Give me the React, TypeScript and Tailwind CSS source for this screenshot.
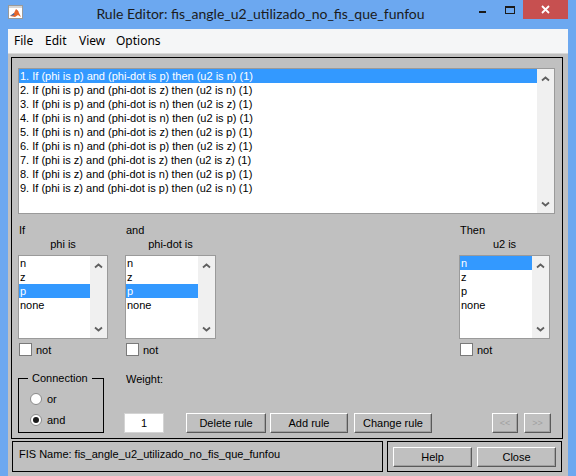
import React from "react";

const UI = "font-['Liberation_Sans',Arial,sans-serif] text-[11px]";

const RULES = [
  "1. If (phi is p) and (phi-dot is p) then (u2 is n) (1)",
  "2. If (phi is p) and (phi-dot is z) then (u2 is n) (1)",
  "3. If (phi is p) and (phi-dot is n) then (u2 is z) (1)",
  "4. If (phi is n) and (phi-dot is n) then (u2 is p) (1)",
  "5. If (phi is n) and (phi-dot is z) then (u2 is p) (1)",
  "6. If (phi is n) and (phi-dot is p) then (u2 is z) (1)",
  "7. If (phi is z) and (phi-dot is z) then (u2 is z) (1)",
  "8. If (phi is z) and (phi-dot is n) then (u2 is p) (1)",
  "9. If (phi is z) and (phi-dot is p) then (u2 is n) (1)",
];

const MF_ITEMS = ["n", "z", "p", "none"];

const Chevron = ({ down }: { down?: boolean }) => (
  <svg width="9" height="6" viewBox="0 0 9 6">
    <path
      d={down ? "M1 1.5 L4.5 4.5 L8 1.5" : "M1 4.5 L4.5 1.5 L8 4.5"}
      fill="none"
      stroke="#5f5f5f"
      strokeWidth="1.8"
    />
  </svg>
);

const ScrollBar = () => (
  <div className="w-[17px] bg-[#f0f0f0] flex flex-col items-center justify-between pt-[7px] pb-[6px]">
    <Chevron />
    <Chevron down />
  </div>
);

interface ListBoxProps {
  items: string[];
  selected: number;
  className: string;
}

const ListBox: React.FC<ListBoxProps> = ({ items, selected, className }) => (
  <div className={`flex border border-[#9a9a9a] bg-white ${className}`}>
    <div className="flex-1 overflow-hidden">
      {items.map((item, i) => (
        <div
          key={i}
          className={`h-[14px] leading-[14px] pl-[1px] whitespace-nowrap ${
            i === selected ? "bg-[#3399ff] text-white" : "text-black"
          }`}
        >
          {item}
        </div>
      ))}
    </div>
    <ScrollBar />
  </div>
);

const NotBox = () => (
  <div className="mt-[4px] ml-[1px] flex items-center h-[13px]">
    <div className="w-[13px] h-[13px] bg-white border border-[#7a7a7a]" />
    <span className="ml-[4px] leading-[14px]">not</span>
  </div>
);

interface ColumnProps {
  head: string;
  sub: string;
  selected: number;
  className: string;
}

const MfColumn: React.FC<ColumnProps> = ({ head, sub, selected, className }) => (
  <div className={`flex flex-col ${className}`}>
    <div className="h-[14px] leading-[14px] pl-[1px]">{head}</div>
    <div className="h-[14px] leading-[14px] text-center">{sub}</div>
    <ListBox items={MF_ITEMS} selected={selected} className="mt-[4px] h-[84px]" />
    <NotBox />
  </div>
);

const Btn = ({
  children,
  className,
  disabled,
}: {
  children: React.ReactNode;
  className: string;
  disabled?: boolean;
}) => (
  <button
    className={`h-[20px] bg-[#c0c0c0] border border-t-white border-l-white border-b-[#5a5a5a] border-r-[#5a5a5a] shadow-[inset_-1px_-1px_0_#a0a0a0] leading-[14px] ${
      disabled ? "text-[#a0a0a0] text-[9px]" : "text-black"
    } ${className}`}
  >
    {children}
  </button>
);

const Radio = ({ label, checked }: { label: string; checked?: boolean }) => (
  <div className="mt-[7px] h-[14px] flex items-center">
    <div className="w-[12px] h-[12px] rounded-full bg-white border border-[#8a8a8a] flex items-center justify-center">
      {checked && <div className="w-[6px] h-[6px] rounded-full bg-[#1a1a1a]" />}
    </div>
    <span className="ml-[5px] leading-[14px]">{label}</span>
  </div>
);

const MatlabIcon = () => (
  <svg width="15" height="14" viewBox="0 0 15 14">
    <rect x="0.5" y="0.5" width="14" height="13" fill="#ffffff" stroke="#9a9a9a" />
    <rect x="1" y="1" width="13" height="2" fill="#d6d6d6" />
    <path d="M2 11 L6 8 L8 4 L10 6 L13 12 L10 10 L7 12 Z" fill="#e8662a" />
    <path d="M8 4 L10 6 L13 12 L11 8 Z" fill="#b8301a" />
    <path d="M2 11 L6 8 L6.5 10 Z" fill="#3b6fb6" />
  </svg>
);

export default function App() {
  return (
    <div className="w-[576px] h-[476px] bg-[#6ca8f0] overflow-hidden flex flex-col">
      {/* title bar */}
      <div className="h-[29px] shrink-0 flex items-start">
        <div className="w-[30px] pl-[8px] pt-[5px]">
          <MatlabIcon />
        </div>
        <div className="flex-1 pl-[20px] text-center mt-[4px] leading-[20px] text-[14px] text-[#1b1b1b] font-['Lato',sans-serif] whitespace-nowrap">
          Rule Editor: fis_angle_u2_utilizado_no_fis_que_funfou
        </div>
        <div className="w-[26px] h-[20px] flex items-center justify-start pl-[8px]">
          <div className="w-[7px] h-[2px] bg-[#1b1b1b] mt-[4px]" />
        </div>
        <div className="w-[26px] h-[20px] flex items-center justify-center">
          <div className="w-[10px] h-[8px] border border-t-2 border-[#1b1b1b] -mt-[1px]" />
        </div>
        <div className="w-[45px] h-[19px] bg-[#c75050] flex items-center justify-center">
          <svg width="9" height="9" viewBox="0 0 9 9">
            <path d="M1 1 L8 8 M8 1 L1 8" stroke="#ffffff" strokeWidth="1.8" />
          </svg>
        </div>
        <div className="w-[8px]" />
      </div>

      {/* client area */}
      <div className="mx-[8px] flex-1 flex flex-col">
        {/* menu bar */}
        <div className="h-[25px] shrink-0 bg-[#f5f6f7] border-b border-[#d9d9d9] flex items-center text-[12px] text-black font-['Noto_Sans',sans-serif]">
          <span className="w-[31px] pl-[6px]">File</span>
          <span className="w-[34px] pl-[6px]">Edit</span>
          <span className="w-[37px] pl-[6px]">View</span>
          <span className="pl-[6px]">Options</span>
        </div>

        {/* figure */}
        <div className={`flex-1 bg-[#c0c0c0] pt-[3px] pl-[3px] ${UI} text-black`}>
          <div className="w-[552px] h-[382px] border border-black flex flex-col pt-[10px] px-[6px]">
            <ListBox items={RULES} selected={0} className="w-[537px] h-[146px]" />

            <div className="flex mt-[9px]">
              <MfColumn head="If" sub="phi is" selected={2} className="w-[90px]" />
              <MfColumn head="and" sub="phi-dot is" selected={2} className="w-[91px] ml-[17px]" />
              <MfColumn head="Then" sub="u2 is" selected={0} className="w-[91px] ml-[243px]" />
            </div>

            <div className="flex mt-[15px]">
              <fieldset className="w-[86px] h-[62px] border border-black">
                <legend className="ml-[9px] px-[4px] leading-[14px]">Connection</legend>
                <div className="pl-[11px]">
                  <Radio label="or" />
                  <Radio label="and" checked />
                </div>
              </fieldset>

              <div className="ml-[20px] flex flex-col">
                <div className="pl-[2px] pt-[1px] leading-[14px]">Weight:</div>
                <div className="flex mt-[27px]">
                  <div className="w-[40px] h-[20px] bg-white border border-[#d4d4d4] text-center leading-[18px]">
                    1
                  </div>
                  <Btn className="w-[80px] ml-[22px]">Delete rule</Btn>
                  <Btn className="w-[78px] ml-[4px]">Add rule</Btn>
                  <Btn className="w-[78px] ml-[6px]">Change rule</Btn>
                  <Btn className="w-[26px] ml-[60px]" disabled>
                    &lt;&lt;
                  </Btn>
                  <Btn className="w-[27px] ml-[6px]" disabled>
                    &gt;&gt;
                  </Btn>
                </div>
              </div>
            </div>
          </div>

          {/* status row */}
          <div className="flex mt-[2px] ml-[1px]">
            <div className="w-[371px] h-[31px] border border-black pl-[6px] pt-[5px] leading-[14px]">
              FIS Name: fis_angle_u2_utilizado_no_fis_que_funfou
            </div>
            <div className="w-[175px] h-[31px] ml-[4px] border border-black flex pl-[5px] pt-[5px]">
              <Btn className="w-[79px]">Help</Btn>
              <Btn className="w-[79px] ml-[5px]">Close</Btn>
            </div>
          </div>
        </div>
      </div>
    </div>
  );
}
